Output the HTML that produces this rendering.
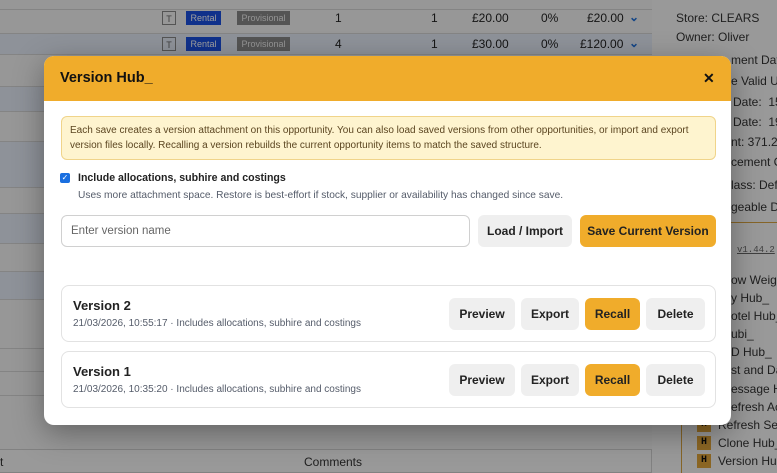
<!DOCTYPE html>
<html><head><meta charset="utf-8"><style>
*{box-sizing:border-box;margin:0;padding:0}
body{width:777px;height:473px;overflow:hidden;position:relative;background:#f4f4f4;font-family:"Liberation Sans",sans-serif}
.abs{position:absolute}
.row{position:absolute;left:0;width:652px;border-bottom:1px solid #d6d6d6}
.side{position:absolute;left:652px;top:0;width:125px;height:473px;background:#f7f7f7;font-size:12px;color:#333}
.side div{position:absolute;left:79px;white-space:nowrap}
.hb{position:absolute;left:45px;width:14px;height:14px;background:#e0a53a;color:#111;font-size:10px;font-weight:bold;text-align:center;line-height:14px;font-family:"Liberation Mono",monospace}
.ov{position:absolute;left:0;top:0;width:777px;height:473px;background:rgba(0,0,0,.38)}
.modal{position:absolute;left:44px;top:56px;width:687px;height:369px;background:#fff;border-radius:10px;overflow:hidden;box-shadow:0 8px 30px rgba(0,0,0,.35)}
.hdr{height:45px;background:#f0ac2b;position:relative}
.btn{position:absolute;height:32px;border-radius:6px;background:#efefef;font-size:12px;font-weight:bold;color:#222;text-align:center;line-height:32px}
.or{background:#f0ac2b}
.card{position:absolute;left:17px;width:655px;height:57px;border:1px solid #e2e2e2;border-radius:8px}
.card .t{position:absolute;left:11px;top:12px;font-size:13px;font-weight:bold;color:#222}
.card .s{position:absolute;left:11px;top:32px;font-size:10px;color:#555c6a}
.bdg{position:absolute;top:0;height:14px;font-size:9px;line-height:14px;text-align:center}
</style></head><body>
<div class="row" style="top:0;height:10px;background:#f4f4f4"></div>
<div class="row" style="top:10px;height:24px;background:#f4f4f4"></div>
<div class="row" style="top:34px;height:21px;background:#e6ecf7"></div>
<div class="row" style="top:55px;height:32px;background:#f4f4f4"></div>
<div class="row" style="top:87px;height:25px;background:#e6ecf7"></div>
<div class="row" style="top:112px;height:30px;background:#f4f4f4"></div>
<div class="row" style="top:142px;height:46px;background:#e6ecf7"></div>
<div class="row" style="top:188px;height:26px;background:#f4f4f4"></div>
<div class="row" style="top:214px;height:30px;background:#e6ecf7"></div>
<div class="row" style="top:244px;height:28px;background:#f4f4f4"></div>
<div class="row" style="top:272px;height:28px;background:#e6ecf7"></div>
<div class="row" style="top:300px;height:49px;background:#f4f4f4"></div>
<div class="row" style="top:349px;height:23px;background:#f4f4f4"></div>
<div class="row" style="top:372px;height:24px;background:#f4f4f4"></div>
<div class="abs" style="left:0;top:449px;width:652px;height:24px;border:1px solid #d0d0d0;border-left:none;background:#f7f7f7;font-size:12px;color:#333"><span class="abs" style="left:0;top:5px">t</span><span class="abs" style="left:304px;top:5px">Comments</span></div>
<div class="abs" style="top:11px;left:0;width:652px;height:14px;font-size:12px;color:#222">
<span class="bdg" style="left:162px;width:14px;border:1px solid #888;color:#666">T</span>
<span class="bdg" style="left:186px;width:35px;background:#1a4fe0;color:#fff">Rental</span>
<span class="bdg" style="left:237px;width:53px;background:#888;color:#eee">Provisional</span>
<span class="abs" style="left:335px;top:0">1</span><span class="abs" style="left:431px;top:0">1</span>
<span class="abs" style="left:472px;top:0">£20.00</span><span class="abs" style="left:541px;top:0">0%</span><span class="abs" style="left:587px;top:0">£20.00</span><span class="abs" style="left:629px;top:-1px;color:#1d6fd8;font-weight:bold">&#8964;</span></div>
<div class="abs" style="top:37px;left:0;width:652px;height:14px;font-size:12px;color:#222">
<span class="bdg" style="left:162px;width:14px;border:1px solid #888;color:#666">T</span>
<span class="bdg" style="left:186px;width:35px;background:#1a4fe0;color:#fff">Rental</span>
<span class="bdg" style="left:237px;width:53px;background:#888;color:#eee">Provisional</span>
<span class="abs" style="left:335px;top:0">4</span><span class="abs" style="left:431px;top:0">1</span>
<span class="abs" style="left:472px;top:0">£30.00</span><span class="abs" style="left:541px;top:0">0%</span><span class="abs" style="left:580px;top:0">£120.00</span><span class="abs" style="left:629px;top:-1px;color:#1d6fd8;font-weight:bold">&#8964;</span></div>
<div class="side">
<div style="top:11px;left:24px">Store: CLEARS</div><div style="top:30px;left:24px">Owner: Oliver</div>
<div style="top:53px">ment Dat</div><div style="top:74px">e Valid U</div>
<div style="top:95px;left:81px">Date:&nbsp; 15</div><div style="top:115px;left:81px">Date:&nbsp; 19/</div>
<div style="top:135px">nt: 371.24</div><div style="top:155px">cement C</div>
<div style="top:178px">lass: Def</div><div style="top:200px">geable Da</div>
<div style="top:222px;left:16px;width:110px;height:1px;background:#d9a441"></div>
<div style="top:222px;left:29px;width:1px;height:251px;background:#d9a441"></div>
<div style="top:245px;left:85px;font-family:'Liberation Mono',monospace;font-size:9px;text-decoration:underline;color:#666">v1.44.2</div>
<div style="top:273px">ow Weig</div><div style="top:291px">y Hub_</div>
<div style="top:309px">otel Hub_</div><div style="top:327px">ubi_</div>
<div style="top:345px">D Hub_</div><div style="top:363px">st and Da</div>
<div style="top:382px">essage H</div><div style="top:400px">efresh Acc</div>
<span class="hb" style="top:418px">H</span><div style="top:418px;left:66px">Refresh Ser</div>
<span class="hb" style="top:436px">H</span><div style="top:436px;left:66px">Clone Hub_</div>
<span class="hb" style="top:454px">H</span><div style="top:454px;left:66px">Version Hu</div>
</div>
<div class="ov"></div>
<div class="modal">
<div class="hdr"><span class="abs" style="left:16px;top:14px;font-size:14.5px;font-weight:bold;color:#111">Version Hub_</span><span class="abs" style="left:659px;top:14px;font-size:14px;font-weight:bold;color:#111">✕</span></div>
<div class="abs" style="left:17px;top:60px;width:655px;height:44px;background:#fef4cf;border:1px solid #f0d48a;border-radius:6px;font-size:10px;line-height:15px;color:#5b4520;padding:6px 8px">Each save creates a version attachment on this opportunity. You can also load saved versions from other opportunities, or import and export version files locally. Recalling a version rebuilds the current opportunity items to match the saved structure.</div>
<div class="abs" style="left:16px;top:117px;width:10px;height:10px;background:#1a6fe0;border-radius:2px;color:#fff;font-size:8px;line-height:10px;text-align:center">✓</div>
<div class="abs" style="left:34px;top:116px;font-size:10.6px;font-weight:bold;color:#222">Include allocations, subhire and costings</div>
<div class="abs" style="left:34px;top:134px;font-size:10.2px;color:#555c6a">Uses more attachment space. Restore is best-effort if stock, supplier or availability has changed since save.</div>
<div class="abs" style="left:17px;top:159px;width:409px;height:32px;border:1px solid #d0d0d0;border-radius:6px;font-size:11.5px;color:#666;padding:9px 9px">Enter version name</div>
<div class="btn" style="left:434px;top:159px;width:94px">Load / Import</div>
<div class="btn or" style="left:536px;top:159px;width:136px">Save Current Version</div>
<div class="card" style="top:229px"><div class="t">Version 2</div><div class="s">21/03/2026, 10:55:17 · Includes allocations, subhire and costings</div>
<div class="btn" style="left:387px;top:12px;width:66px">Preview</div><div class="btn" style="left:459px;top:12px;width:58px">Export</div><div class="btn or" style="left:523px;top:12px;width:55px">Recall</div><div class="btn" style="left:584px;top:12px;width:59px">Delete</div></div>
<div class="card" style="top:295px"><div class="t">Version 1</div><div class="s">21/03/2026, 10:35:20 · Includes allocations, subhire and costings</div>
<div class="btn" style="left:387px;top:12px;width:66px">Preview</div><div class="btn" style="left:459px;top:12px;width:58px">Export</div><div class="btn or" style="left:523px;top:12px;width:55px">Recall</div><div class="btn" style="left:584px;top:12px;width:59px">Delete</div></div>
</div>
</body></html>
